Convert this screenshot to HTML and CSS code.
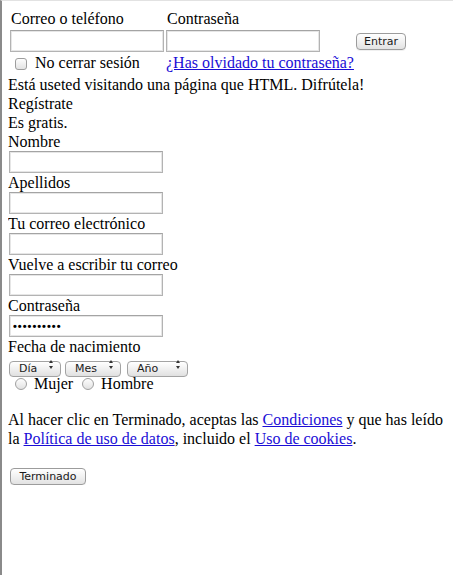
FILE: index.html
```html
<!DOCTYPE html>
<html lang="es">
<head>
<meta charset="utf-8">
<title>Regístrate</title>
<link rel="stylesheet" href="styles.css">
</head>
<body>
<form class="login">
  <label class="lbl" for="login-email">Correo o teléfono</label>
  <label class="lbl" for="login-pass">Contraseña</label>
  <span></span>
  <input class="field" id="login-email" type="text">
  <input class="field" id="login-pass" type="password">
  <div class="enter-cell"><button type="button" class="mac-btn">Entrar</button></div>
  <label class="keep"><input type="checkbox" class="check">No cerrar sesión</label>
  <a href="#" class="link forgot">¿Has olvidado tu contraseña?</a>
</form>

<div class="line welcome">Está useted visitando una página que HTML. Difrútela!</div>

<form class="register">
  <div class="line">Regístrate</div>
  <div class="line">Es gratis.</div>
  <label class="line" for="r-name">Nombre</label>
  <input class="field reg-field" id="r-name" type="text">
  <label class="line" for="r-last">Apellidos</label>
  <input class="field reg-field" id="r-last" type="text">
  <label class="line" for="r-mail">Tu correo electrónico</label>
  <input class="field reg-field" id="r-mail" type="text">
  <label class="line" for="r-mail2">Vuelve a escribir tu correo</label>
  <input class="field reg-field" id="r-mail2" type="text">
  <label class="line" for="r-pass">Contraseña</label>
  <input class="field reg-field pass" id="r-pass" type="password" value="contrasena">
  <div class="line">Fecha de nacimiento</div>
  <div class="dates">
    <span class="sel-wrap sel-day"><select class="sel"><option>Día</option></select></span>
    <span class="sel-wrap sel-month"><select class="sel"><option>Mes</option></select></span>
    <span class="sel-wrap sel-year"><select class="sel"><option>Año</option></select></span>
  </div>
  <div class="line genders">
    <label><input type="radio" name="sex" class="radio">Mujer</label>
    <label><input type="radio" name="sex" class="radio radio-2">Hombre</label>
  </div>
  <p class="terms">Al hacer clic en Terminado, aceptas las <a href="#" class="link">Condiciones</a> y que has leído la <a href="#" class="link">Política de uso de datos</a>, incluido el <a href="#" class="link">Uso de cookies</a>.</p>
  <button type="button" class="mac-btn done">Terminado</button>
</form>
</body>
</html>
```

FILE: styles.css
```css
html {
  border-top: 1px solid #e2e2e2;
  border-left: 2px solid #8a8a8a;
  min-height: 100%;
  box-sizing: border-box;
  background: #fff;
}

body {
  margin: 8px 8px 8px 6px;
  font-family: "Liberation Serif", "Times New Roman", serif;
  font-size: 16px;
  line-height: 19px;
  color: #000;
}

.login {
  display: grid;
  grid-template-columns: 154px 154px 1fr;
  column-gap: 2px;
  row-gap: 2px;
  padding-left: 2px;
  margin: 0;
}

.lbl {
  display: block;
  height: 19px;
  padding-left: 1px;
}

.field {
  box-sizing: border-box;
  width: 154px;
  height: 22px;
  margin: 0;
  padding: 2px 3px;
  border: 1px solid #b3b3b3;
  border-top-color: #a4a4a4;
  box-shadow: inset 0 0 0 1px #e6e6e6;
  background: #fff;
  font-family: "Liberation Sans", Arial, sans-serif;
  font-size: 13px;
  outline: none;
}

.enter-cell {
  display: flex;
  align-items: center;
}

.mac-btn {
  box-sizing: border-box;
  height: 17px;
  padding: 0 10px;
  border: 1px solid #9c9c9c;
  border-radius: 4px;
  background: linear-gradient(#ffffff, #f1f1f1 50%, #e2e2e2);
  box-shadow: 0 1px 0 rgba(0, 0, 0, 0.06);
  font-family: "DejaVu Sans", "Liberation Sans", sans-serif;
  font-size: 11px;
  line-height: 15px;
  color: #1a1a1a;
}

.enter-cell .mac-btn {
  margin-left: 34px;
  width: 50px;
  padding: 0;
}

.keep {
  display: flex;
  align-items: center;
  height: 19px;
  margin-top: -1px;
  white-space: nowrap;
}

.check {
  appearance: none;
  -webkit-appearance: none;
  box-sizing: border-box;
  width: 12px;
  height: 12px;
  margin: 3px 8px 0 5px;
  border: 1px solid #9d9d9d;
  border-radius: 3px;
  background: linear-gradient(#fdfdfd, #e3e3e3);
}

.forgot {
  grid-column: 2 / 4;
  justify-self: start;
  height: 19px;
  margin-top: -1px;
  white-space: nowrap;
}

.link {
  color: #1a0dd6;
  text-decoration: underline;
}

.line {
  display: block;
  height: 19px;
}

.welcome {
  margin-top: 3px;
}

.register {
  margin: 0;
}

.reg-field {
  display: block;
  margin-left: 1px;
}

.pass {
  font-size: 11px;
  letter-spacing: 1px;
  font-weight: bold;
}

.dates {
  display: flex;
  gap: 4px;
  margin-top: 1px;
  padding-left: 1px;
  height: 16px;
}

.sel-wrap {
  position: relative;
  display: inline-block;
}

.sel-wrap::before,
.sel-wrap::after {
  content: "";
  position: absolute;
  right: 8px;
  border-left: 2.5px solid transparent;
  border-right: 2.5px solid transparent;
  pointer-events: none;
}

.sel-wrap::before {
  top: 3px;
  border-bottom: 3px solid #333;
}

.sel-wrap::after {
  top: 9px;
  border-top: 3px solid #333;
}

.sel {
  appearance: none;
  -webkit-appearance: none;
  box-sizing: border-box;
  height: 16px;
  margin: 0;
  padding: 0 0 0 9px;
  border: 1px solid #a3a3a3;
  border-radius: 4px;
  background: linear-gradient(#ffffff, #f0f0f0 50%, #e0e0e0);
  font-family: "DejaVu Sans", "Liberation Sans", sans-serif;
  font-size: 11px;
  line-height: 14px;
  color: #1a1a1a;
}

.sel-day .sel { width: 52px; }
.sel-month .sel { width: 56px; }
.sel-year { margin-left: 2px; }
.sel-year .sel { width: 61px; }

.genders {
  margin-top: 1px;
}

.radio {
  appearance: none;
  -webkit-appearance: none;
  box-sizing: border-box;
  width: 12px;
  height: 12px;
  margin: 0 7px 0 7px;
  vertical-align: -1px;
  border: 1px solid #a0a0a0;
  border-radius: 50%;
  background: linear-gradient(#fdfdfd, #e2e2e2);
}

.radio-2 {
  margin-left: 5px;
}

.terms {
  margin: 17px 0 0;
  line-height: 19px;
}

.done {
  display: block;
  width: 76px;
  padding: 0;
  margin: 20px 0 0 2px;
}
```
